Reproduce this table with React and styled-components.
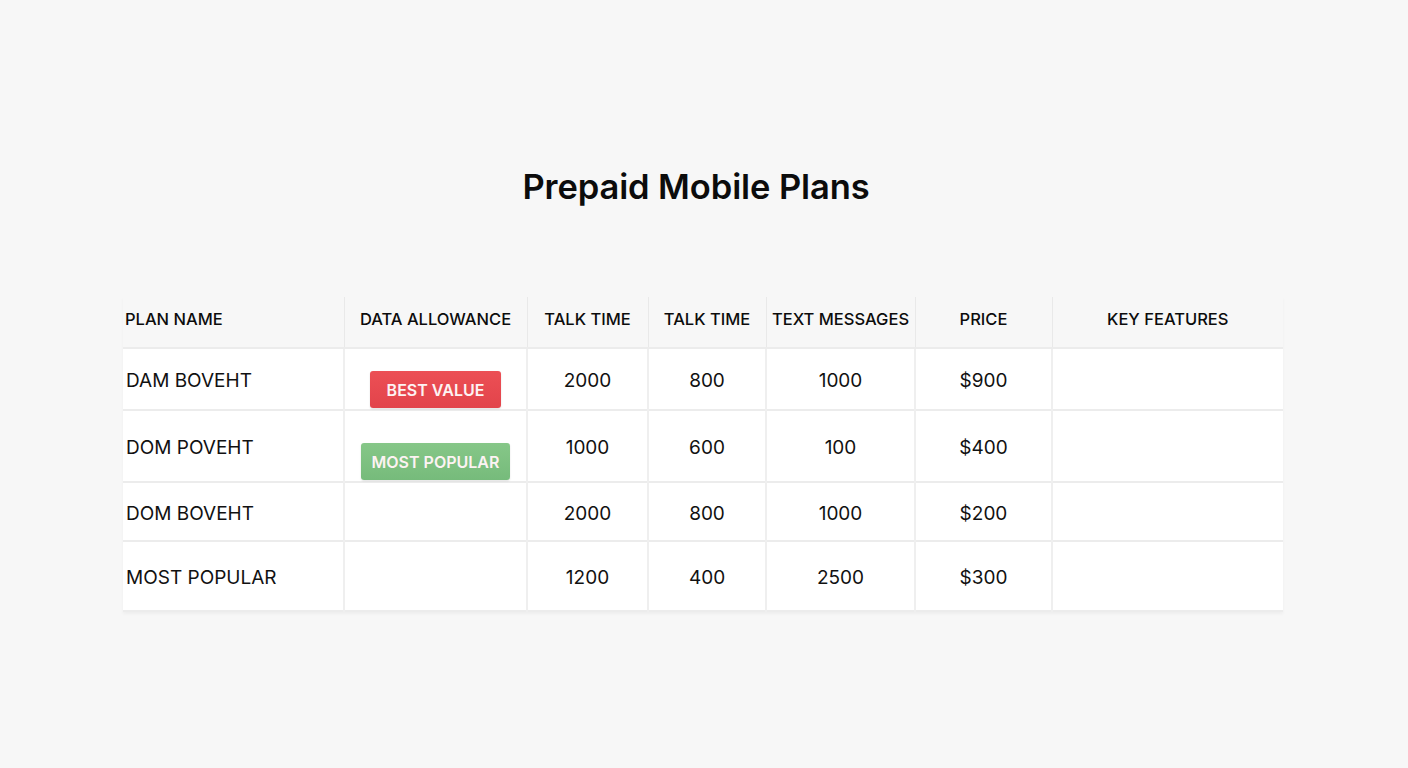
import React from 'react';
import styled, { createGlobalStyle } from 'styled-components';

const GlobalStyle = createGlobalStyle`
  body {
    margin: 0;
    background: #f7f7f7;
    font-family: Inter, "Noto Sans", "Liberation Sans", sans-serif;
    color: #111;
  }
`;

const Page = styled.div`
  display: flex;
  flex-direction: column;
  align-items: center;
  padding-top: 166px;
  min-height: 768px;
  box-sizing: border-box;
`;

const Title = styled.h1`
  margin: 0 0 90px;
  font-size: 34.5px;
  line-height: 41px;
  font-weight: 600;
  letter-spacing: -0.1px;
  color: #0c0c0c;
  transform: translateX(-8px);
`;

const Table = styled.table`
  width: 1160px;
  margin-right: 2px;
  border-collapse: collapse;
  table-layout: fixed;
  box-shadow: 0 2px 3px rgba(0, 0, 0, 0.04);
`;

const HeadRow = styled.tr`
  height: 51px;
`;

const HeadCell = styled.th`
  padding: 0 2px 6px;
  font-size: 16.5px;
  font-weight: 500;
  color: #0c0c0c;
  text-align: ${(p) => (p.$left ? 'left' : 'center')};
  border-left: 1px solid #e9e9e9;
  border-bottom: 2px solid #ececec;
  white-space: nowrap;
  &:first-child {
    border-left: none;
  }
`;

const Row = styled.tr`
  height: ${(p) => p.$h}px;
  background: #fff;
  border-bottom: 2px solid #ececec;
`;

const Cell = styled.td`
  padding: ${(p) => (p.$bottom ? '0 3px 1px' : '3px 3px 0')};
  font-size: 19px;
  font-weight: 400;
  text-align: ${(p) => (p.$left ? 'left' : 'center')};
  vertical-align: ${(p) => (p.$bottom ? 'bottom' : 'middle')};
  border-left: 2px solid #efefef;
  white-space: nowrap;
  &:first-child {
    border-left: none;
  }
`;

const Badge = styled.span`
  display: inline-flex;
  align-items: center;
  justify-content: center;
  height: 37px;
  width: ${(p) => p.$w}px;
  border-radius: 3px;
  font-size: 16px;
  font-weight: 600;
  color: #fdf3f3;
  background: ${(p) =>
    p.$kind === 'red'
      ? 'linear-gradient(180deg, #ec4f55, #e2444b)'
      : 'linear-gradient(180deg, #86c788, #76bb7b)'};
  box-shadow: 0 1px 2px rgba(0, 0, 0, 0.12);
`;

const columns = [221, 183, 121, 118, 149, 137, 231];

const headers = [
  'PLAN NAME',
  'DATA ALLOWANCE',
  'TALK TIME',
  'TALK TIME',
  'TEXT MESSAGES',
  'PRICE',
  'KEY FEATURES',
];

const plans = [
  { name: 'DAM BOVEHT', badge: { text: 'BEST VALUE', kind: 'red', w: 131 }, a: '2000', b: '800', c: '1000', price: '$900', h: 62 },
  { name: 'DOM POVEHT', badge: { text: 'MOST POPULAR', kind: 'green', w: 149 }, a: '1000', b: '600', c: '100', price: '$400', h: 72 },
  { name: 'DOM BOVEHT', a: '2000', b: '800', c: '1000', price: '$200', h: 59 },
  { name: 'MOST POPULAR', a: '1200', b: '400', c: '2500', price: '$300', h: 70 },
];

export default function App() {
  return (
    <Page>
      <GlobalStyle />
      <Title>Prepaid Mobile Plans</Title>
      <Table>
        <colgroup>
          {columns.map((w, i) => (
            <col key={i} style={{ width: w }} />
          ))}
        </colgroup>
        <thead>
          <HeadRow>
            {headers.map((h, i) => (
              <HeadCell key={i} $left={i === 0}>
                {h}
              </HeadCell>
            ))}
          </HeadRow>
        </thead>
        <tbody>
          {plans.map((p) => (
            <Row key={p.name} $h={p.h}>
              <Cell $left>{p.name}</Cell>
              <Cell $bottom>
                {p.badge && (
                  <Badge $kind={p.badge.kind} $w={p.badge.w}>
                    {p.badge.text}
                  </Badge>
                )}
              </Cell>
              <Cell>{p.a}</Cell>
              <Cell>{p.b}</Cell>
              <Cell>{p.c}</Cell>
              <Cell>{p.price}</Cell>
              <Cell />
            </Row>
          ))}
        </tbody>
      </Table>
    </Page>
  );
}
